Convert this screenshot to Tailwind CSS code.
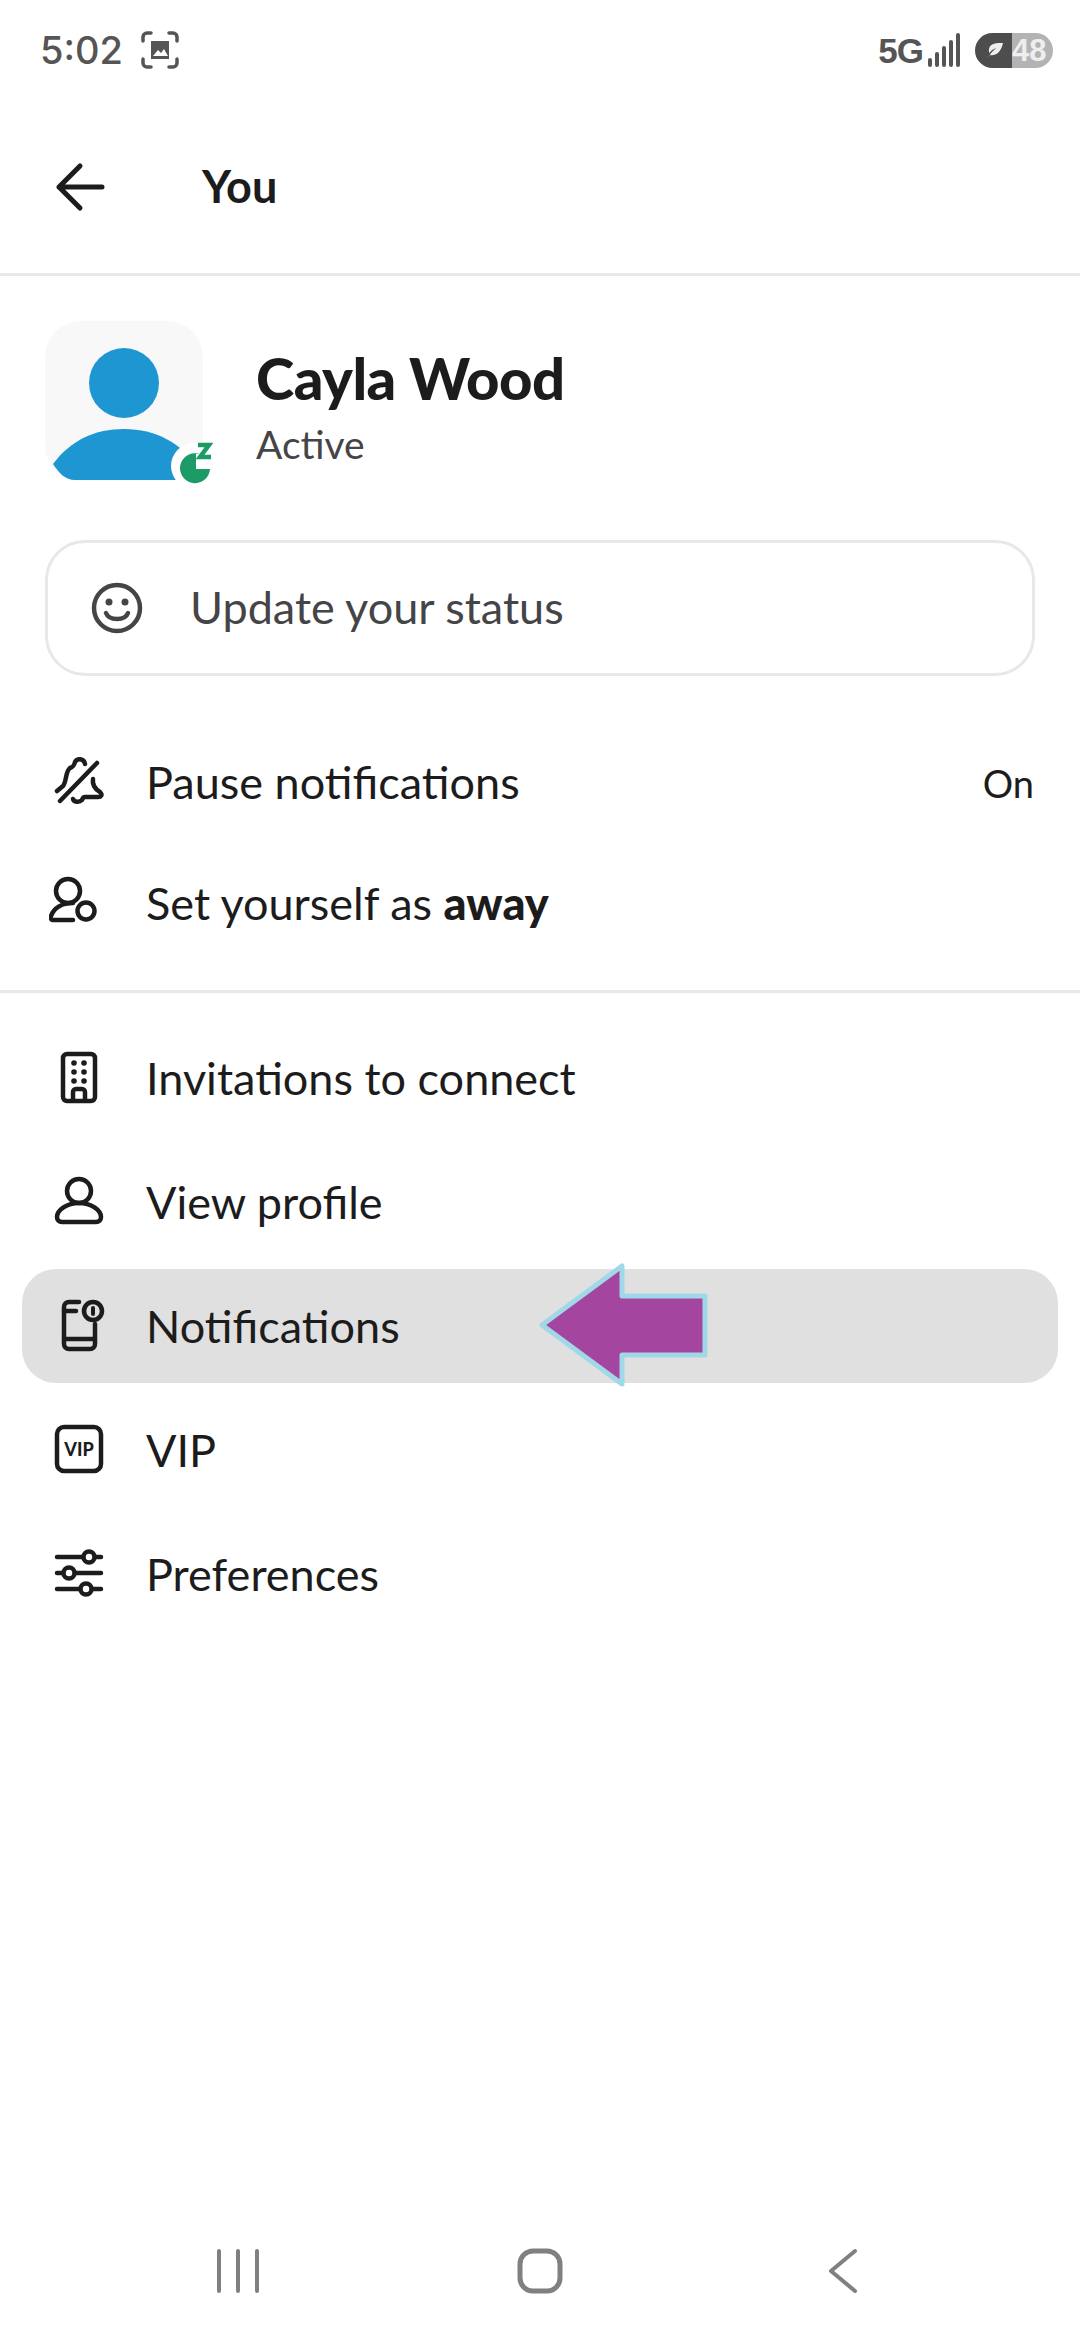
<!DOCTYPE html>
<html lang="en">
  <head>
    <meta charset="UTF-8" />
    <meta name="viewport" content="width=device-width, initial-scale=1.0" />
    <title>You</title>
    <script src="https://cdn.jsdelivr.net/npm/@tailwindcss/browser@4"></script>
  </head>
  <body class="bg-white">
    <div class="relative flex flex-col h-[2340px] w-[1080px] overflow-hidden bg-white text-[#1d1c1d] font-['Lato','Noto_Sans',sans-serif]">
      <!-- status bar -->
      <div class="flex items-center h-[100px] pl-[40px] pr-[27px] text-[#555555] font-['Inter','Liberation_Sans',sans-serif]">
        <span class="text-[38px] font-medium leading-none">5:02</span>
        <svg class="ml-[18px] w-[38px] h-[38px]" viewBox="0 0 38 38" fill="none" stroke="#555555" stroke-width="3.5" stroke-linecap="round">
          <path d="M2 10V6a4 4 0 0 1 4-4h4M28 2h4a4 4 0 0 1 4 4v4M36 28v4a4 4 0 0 1-4 4h-4M10 36H6a4 4 0 0 1-4-4v-4" />
          <path d="M10 10h18v18H10z" fill="#555555" stroke="none" />
          <path d="M12 25l5-6 3 3 3-4 4 7z" fill="#ffffff" stroke="none" />
        </svg>
        <span class="ml-auto text-[35px] font-bold leading-none tracking-[-1px] font-['Liberation_Sans',sans-serif]">5G</span>
        <svg class="ml-[3px] w-[36px] h-[36px]" viewBox="0 0 36 36" fill="#555555">
          <rect x="2" y="26" width="4" height="9" rx="2" />
          <rect x="9" y="20" width="4" height="15" rx="2" />
          <rect x="16" y="14" width="4" height="21" rx="2" />
          <rect x="23" y="8" width="4" height="27" rx="2" />
          <rect x="30" y="1" width="4" height="34" rx="2" />
        </svg>
        <div class="ml-[13px] flex h-[35px] w-[78px] rounded-full overflow-hidden">
          <div class="flex items-center justify-center w-[37px] bg-[#4d4d4d]">
            <svg class="w-[20px] h-[20px]" viewBox="0 0 20 20" fill="#eeeeee"><path d="M1 18c3-1 4-2 5-3 5 1 11-2 13-12-6 0-13 0-14 6-.5 2 0 3 .5 4 2-3 4-4 7-5-3 2-6 5-7 8z" /></svg>
          </div>
          <div class="flex items-center flex-1 bg-[#b3b3b3] text-[#eeeeee] text-[31px] font-bold leading-none font-['Liberation_Sans',sans-serif]">48</div>
        </div>
      </div>

      <!-- header -->
      <div class="flex items-center h-[176px] pl-[55px] border-b-[3px] border-[#e8e8e8]">
        <svg class="w-[50px] h-[50px]" viewBox="0 0 50 50" fill="none" stroke="#1d1c1d" stroke-width="5" stroke-linecap="round" stroke-linejoin="round">
          <path d="M47 25H4M25 4L4 25l21 21" />
        </svg>
        <h1 class="ml-[97px] text-[45px] font-bold leading-none">You</h1>
      </div>

      <!-- profile -->
      <div class="flex items-center mt-[45px] pl-[45px]">
        <div class="relative w-[158px] h-[160px] rounded-[36px] bg-[#f8f8f8]">
          <svg class="absolute left-0 top-0 w-[180px] h-[180px]" viewBox="0 0 180 180">
            <circle cx="79" cy="62" r="35" fill="#1e96d2" />
            <path d="M8 143c18-24 42-35 71-35 32 0 57 14 75 39 1 7 0 11-4 12H30C20 159 14 152 8 143z" fill="#1e96d2" />
            <circle cx="149" cy="145" r="23" fill="#ffffff" />
            <path d="M155 133a15 15 0 1 0 10 15h-14v-15z" fill="#1d9b66" />
            <path d="M153 124h11l-9 12h11" fill="none" stroke="#1d9b66" stroke-width="4.5" />
          </svg>
        </div>
        <div class="ml-[53px] mt-[10px]">
          <div class="text-[58px] font-black leading-[64px] tracking-[-0.5px]">Cayla Wood</div>
          <div class="mt-[12px] text-[39px] leading-[44px] text-[#454447]">Active</div>
        </div>
      </div>

      <!-- status input -->
      <div class="flex items-center h-[136px] mx-[45px] mt-[59px] pl-[43px] rounded-[40px] border-[3px] border-[#e8e8e8] text-[#454447]">
        <svg class="w-[52px] h-[52px]" viewBox="0 0 52 52" fill="none" stroke="#454447" stroke-width="4.5" stroke-linecap="round">
          <circle cx="26" cy="26" r="23" />
          <circle cx="18" cy="20" r="3.5" fill="#454447" stroke="none" />
          <circle cx="34" cy="20" r="3.5" fill="#454447" stroke="none" />
          <path d="M15 31c3 8 19 8 22 0" />
        </svg>
        <span class="ml-[47px] -mt-[2px] text-[45px] leading-none">Update your status</span>
      </div>

      <!-- pause / away -->
      <div class="flex flex-col mt-[46px]">
        <div class="flex items-center h-[121px] px-[46px]">
          <svg class="w-[60px] h-[60px] ml-[3px] shrink-0" viewBox="0 0 60 60" fill="none" stroke="#1d1c1d" stroke-width="4.5" stroke-linecap="round" stroke-linejoin="round">
            <path d="M11 48L48 10" />
            <path d="M8 38l6-5c4-5 2-14 7-18 3-1 4-2 5-6 2-4 9-4 10 2" />
            <path d="M44 26c-1 6 2 10 7 13 3 3 1 5-2 5H36c-2 0-2 1-3 3-3 3-8 2-9-1" />
          </svg>
          <span class="ml-[37px] text-[45px] leading-none">Pause notifications</span>
          <span class="ml-auto text-[38px] leading-none">On</span>
        </div>
        <div class="flex items-center h-[121px] px-[46px]">
          <svg class="w-[60px] h-[60px] ml-[3px] shrink-0" viewBox="0 0 60 60" fill="none" stroke="#1d1c1d" stroke-width="4.5" stroke-linecap="round" stroke-linejoin="round">
            <circle cx="19" cy="17" r="12" />
            <path d="M24 46H4c-2 0-3-2-2-4 3-8 11-13 22-13" />
            <circle cx="37" cy="37" r="8.5" />
          </svg>
          <span class="ml-[37px] text-[45px] leading-none">Set yourself as <b class="font-black">away</b></span>
        </div>
      </div>

      <div class="h-[3px] mt-[26px] bg-[#e8e8e8]"></div>

      <!-- menu -->
      <div class="flex flex-col mt-[23px]">
        <div class="flex items-center h-[124px] px-[49px]">
          <svg class="w-[60px] h-[60px] shrink-0" viewBox="0 0 60 60" fill="none" stroke="#1d1c1d" stroke-width="4.5" stroke-linecap="round" stroke-linejoin="round">
            <rect x="14" y="6" width="32" height="47" rx="4" />
            <path d="M24 52V44a3 3 0 0 1 3-3h6a3 3 0 0 1 3 3v8" />
            <g fill="#1d1c1d" stroke="none">
              <circle cx="25" cy="15" r="2.8" /><circle cx="35" cy="15" r="2.8" />
              <circle cx="25" cy="24" r="2.8" /><circle cx="35" cy="24" r="2.8" />
              <circle cx="25" cy="33" r="2.8" /><circle cx="35" cy="33" r="2.8" />
            </g>
          </svg>
          <span class="ml-[37px] text-[45px] leading-none">Invitations to connect</span>
        </div>
        <div class="flex items-center h-[124px] px-[49px]">
          <svg class="w-[60px] h-[60px] shrink-0" viewBox="0 0 60 60" fill="none" stroke="#1d1c1d" stroke-width="4.5" stroke-linecap="round" stroke-linejoin="round">
            <circle cx="30" cy="19" r="12" />
            <path d="M30 31c12 0 22 7 22 14 0 3-2 5-5 5H13c-3 0-5-2-5-5 0-7 10-14 22-14z" />
          </svg>
          <span class="ml-[37px] text-[45px] leading-none">View profile</span>
        </div>
        <div class="flex items-center h-[114px] my-[5px] mx-[22px] px-[27px] rounded-[34px] bg-[#e0e0e0]">
          <svg class="w-[60px] h-[60px] shrink-0" viewBox="0 0 60 60" fill="none" stroke="#1d1c1d" stroke-width="4.5" stroke-linecap="round" stroke-linejoin="round">
            <path d="M30 6H20a5 5 0 0 0-5 5v37a5 5 0 0 0 5 5h21a5 5 0 0 0 5-5V28" />
            <path d="M15 15h12M15 43h31" />
            <circle cx="44" cy="15" r="9" />
            <path d="M44 12v6" stroke-width="4" />
          </svg>
          <span class="ml-[37px] text-[45px] leading-none">Notifications</span>
        </div>
        <div class="flex items-center h-[124px] px-[49px]">
          <svg class="w-[60px] h-[60px] shrink-0" viewBox="0 0 60 60" fill="none" stroke="#1d1c1d" stroke-width="4.5">
            <rect x="8" y="7" width="44" height="44" rx="7" />
            <text x="30" y="35.5" text-anchor="middle" fill="#1d1c1d" stroke="none" font-family="Lato" font-weight="900" font-size="18">VIP</text>
          </svg>
          <span class="ml-[37px] text-[45px] leading-none">VIP</span>
        </div>
        <div class="flex items-center h-[124px] px-[49px]">
          <svg class="w-[60px] h-[60px] shrink-0" viewBox="0 0 60 60" fill="none" stroke="#1d1c1d" stroke-width="4.5" stroke-linecap="round">
            <path d="M8 13h26M46 13h6M8 29h6M26 29h26M8 45h23M43 45h9" />
            <circle cx="40" cy="13" r="5.5" />
            <circle cx="20" cy="29" r="5.5" />
            <circle cx="37" cy="45" r="5.5" />
          </svg>
          <span class="ml-[37px] text-[45px] leading-none">Preferences</span>
        </div>
      </div>

      <!-- arrow annotation over the selected row -->
      <svg class="absolute left-[530px] top-[1255px] w-[190px] h-[140px]" viewBox="0 0 190 140">
        <path d="M12 70L92 11V41H175V100H92V129z" fill="#a4459f" stroke="#a0d8e8" stroke-width="5" stroke-linejoin="round" />
      </svg>

      <!-- android nav -->
      <div class="mt-auto flex items-center h-[48px] mb-[45px] pl-[216px]">
        <svg class="w-[44px] h-[46px]" viewBox="0 0 44 46" fill="none" stroke="#808080" stroke-width="4" stroke-linecap="round">
          <path d="M3 3v40M22 3v40M41 3v40" />
        </svg>
        <svg class="ml-[257px] w-[46px] h-[46px]" viewBox="0 0 46 46" fill="none" stroke="#808080" stroke-width="5">
          <rect x="3" y="3" width="40" height="40" rx="13" />
        </svg>
        <svg class="ml-[265px] w-[30px] h-[46px]" viewBox="0 0 30 46" fill="none" stroke="#808080" stroke-width="4" stroke-linecap="round" stroke-linejoin="round">
          <path d="M27 3L3 23l24 20" />
        </svg>
      </div>
    </div>
  </body>
</html>
